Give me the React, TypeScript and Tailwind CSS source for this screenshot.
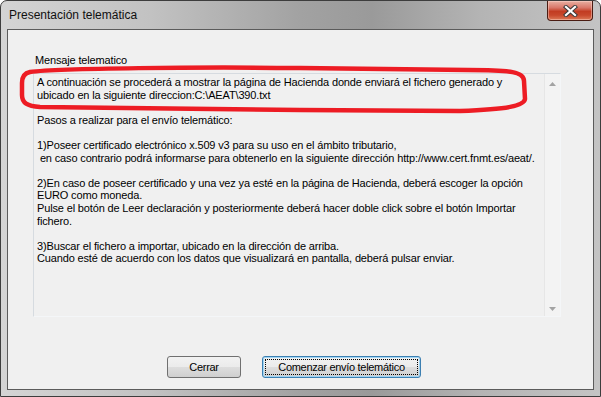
import React from "react";

const lines = [
  "A continuación se procederá a mostrar la página de Hacienda donde enviará el fichero generado y",
  "ubicado en la siguiente direccion:C:\\AEAT\\390.txt",
  "",
  "Pasos a realizar para el envío telemático:",
  "",
  "1)Poseer certificado electrónico x.509 v3 para su uso en el ámbito tributario,",
  " en caso contrario podrá informarse para obtenerlo en la siguiente dirección http://www.cert.fnmt.es/aeat/.",
  "",
  "2)En caso de poseer certificado y una vez ya esté en la página de Hacienda, deberá escoger la opción",
  "EURO como moneda.",
  "Pulse el botón de Leer declaración y posteriormente deberá hacer doble click sobre el botón Importar",
  "fichero.",
  "",
  "3)Buscar el fichero a importar, ubicado en la dirección de arriba.",
  "Cuando esté de acuerdo con los datos que visualizará en pantalla, deberá pulsar enviar.",
];

function CloseButton() {
  return (
    <div className="ml-auto mr-[7px] w-[46px] h-[20px] rounded-b-[4px] border border-t-0 border-[#4a1c12] bg-[linear-gradient(180deg,#e8b0a2_0%,#d9786a_35%,#c23c22_55%,#c8482c_75%,#dc7a58_100%)] shadow-[inset_0_0_0_1px_rgba(255,220,210,0.45)] flex items-center justify-center">
      <svg width="15" height="12" viewBox="0 0 15 12">
        <path d="M3 2 L12 10 M12 2 L3 10" stroke="#3b3b3b" strokeWidth="4.2" strokeLinecap="square" />
        <path d="M3 2 L12 10 M12 2 L3 10" stroke="#ffffff" strokeWidth="2.2" strokeLinecap="square" />
      </svg>
    </div>
  );
}

function ScrollTrack() {
  return (
    <div className="w-[16px] border-l border-[#e6e6e6] bg-[#f3f3f3] flex flex-col items-center justify-between pt-[8px] pb-[5px]">
      <svg width="7" height="4" viewBox="0 0 7 4">
        <path d="M0 4 L3.5 0 L7 4 Z" fill="#a3a3a3" />
      </svg>
      <svg width="7" height="4" viewBox="0 0 7 4">
        <path d="M0 0 L7 0 L3.5 4 Z" fill="#a3a3a3" />
      </svg>
    </div>
  );
}

function Ellipse() {
  return (
    <svg className="absolute left-0 top-0 pointer-events-none" width="601" height="397" viewBox="0 0 601 397">
      <path
        d="M30 72 C60 68 200 67 300 68 L468 70 C512 70 524 72 524 81 L525 99 C524 106 508 109 460 111 L300 110 L40 107 C27 106 22 103 22 95 L22 83 C22 76 25 73 30 72 Z"
        fill="none"
        stroke="#ed1c24"
        strokeWidth="4.5"
        strokeLinejoin="round"
      />
    </svg>
  );
}

export default function App() {
  return (
    <div className="relative w-[601px] h-[397px] bg-white font-['Liberation_Sans',Arial,sans-serif] text-black">
      <div className="h-full flex flex-col rounded-t-[7px] border border-[#3d3d3d] bg-[linear-gradient(90deg,#d4d4d4_0%,#c2c2c2_25%,#a2a2a2_50%,#9a9a9a_62%,#b4b4b4_80%,#c4c4c4_100%)]">
        <div className="h-[28px] flex items-start">
          <span className="pl-[8px] pt-[7px] text-[12px] leading-[15px] text-[#101010]">Presentación telemática</span>
          <CloseButton />
        </div>
        <div className="flex-1 px-[6px] pb-[6px]">
          <div className="h-full border border-[#5b5b5b] bg-[#f0f0f0] flex flex-col text-[11px] tracking-[-0.15px]">
            <div className="ml-[27px] mt-[24px] h-[13px] leading-[13px]">Mensaje telematico</div>
            <div className="ml-[25px] mt-[6px] w-[528px] h-[244px] border border-[#d6dbe0] border-r-[#f4f6f8] border-b-[#f4f6f8] flex">
              <div className="flex-1 overflow-hidden pl-[3px] pt-[2px]">
                {lines.map((l, i) => (
                  <div key={i} className="h-[12.6px] leading-[12.6px] whitespace-pre">
                    {l}
                  </div>
                ))}
              </div>
              <ScrollTrack />
            </div>
            <div className="flex mt-[39px] ml-[159px] gap-[21px]">
              <button className="w-[74px] h-[22px] rounded-[3px] border border-[#707070] bg-[linear-gradient(180deg,#f2f2f2_0%,#ebebeb_50%,#dddddd_51%,#cfcfcf_100%)] text-[11px] tracking-[-0.3px] leading-none">
                Cerrar
              </button>
              <button className="w-[159px] h-[22px] rounded-[3px] border border-[#3c7fb1] bg-[linear-gradient(180deg,#f2f2f2_0%,#ebebeb_50%,#dddddd_51%,#cfcfcf_100%)] shadow-[inset_0_0_0_1px_#9fd5f5] p-[2px] text-[11px] tracking-[-0.3px] leading-none">
                <div className="h-full w-full border border-dotted border-black flex items-center justify-center">
                  Comenzar envío telemático
                </div>
              </button>
            </div>
          </div>
        </div>
      </div>
      <Ellipse />
    </div>
  );
}
